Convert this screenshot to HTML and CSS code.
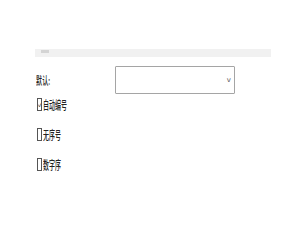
FILE: index.html
```html
<!DOCTYPE html>
<html lang="zh">
<head>
    <meta charset="UTF-8">
    <title>设置</title>
    <link rel="stylesheet" href="styles.css">
</head>
<body>
    <div class="panel">
        <!-- Top strip -->
        <div class="strip"><span class="strip-knob"></span></div>

        <!-- Default select -->
        <div class="field-row">
            <span class="label">默认:</span>
            <div class="select-box"><span class="chevron">v</span></div>
        </div>

        <!-- Options -->
        <div class="option checked">
            <span class="box">✓</span><span class="text">自动编号</span>
        </div>
        <div class="option">
            <span class="box"></span><span class="text">无序号</span>
        </div>
        <div class="option">
            <span class="box"></span><span class="text">数字序</span>
        </div>
    </div>
</body>
</html>
```

FILE: styles.css
```css
* {
    margin: 0;
    padding: 0;
    box-sizing: border-box;
}

body {
    background-color: #ffffff;
    color: #222;
    font-family: "Noto Sans CJK SC", "DejaVu Sans", sans-serif;
}

.panel {
    padding: 49px 0 0 35px;
    width: 271px;
}

/* Top strip */
.strip {
    height: 8px;
    background-color: #f1f1f1;
    padding: 1px 0 0 6px;
}

.strip-knob {
    display: block;
    width: 8px;
    height: 3px;
    background-color: #d4d4d4;
}

/* Select row */
.field-row {
    display: flex;
    align-items: center;
    margin-top: 9px;
    height: 28px;
}

.label {
    width: 80px;
    font-size: 11px;
    line-height: 11px;
    font-weight: 500;
    padding-left: 2px;
    display: inline-block;
    transform: scaleX(0.55);
    transform-origin: left center;
}

.select-box {
    width: 120px;
    height: 28px;
    border: 1px solid #a5a5a5;
    border-radius: 1px;
    display: flex;
    align-items: center;
    justify-content: flex-end;
    padding-right: 3px;
}

.chevron {
    font-family: "DejaVu Sans", sans-serif;
    font-size: 7px;
    color: #555;
}

/* Options */
.option {
    display: flex;
    align-items: center;
    height: 13px;
    margin-top: 17px;
    padding-left: 2px;
}

.option.checked {
    margin-top: 4px;
}

.box {
    width: 5px;
    height: 13px;
    border: 1px solid #555;
    font-size: 7px;
    line-height: 10px;
    overflow: hidden;
    text-align: center;
    color: #333;
}

.text {
    font-size: 12px;
    line-height: 12px;
    font-weight: 500;
    display: inline-block;
    transform: scaleX(0.5);
    transform-origin: left center;
    margin-left: 1px;
}
```
